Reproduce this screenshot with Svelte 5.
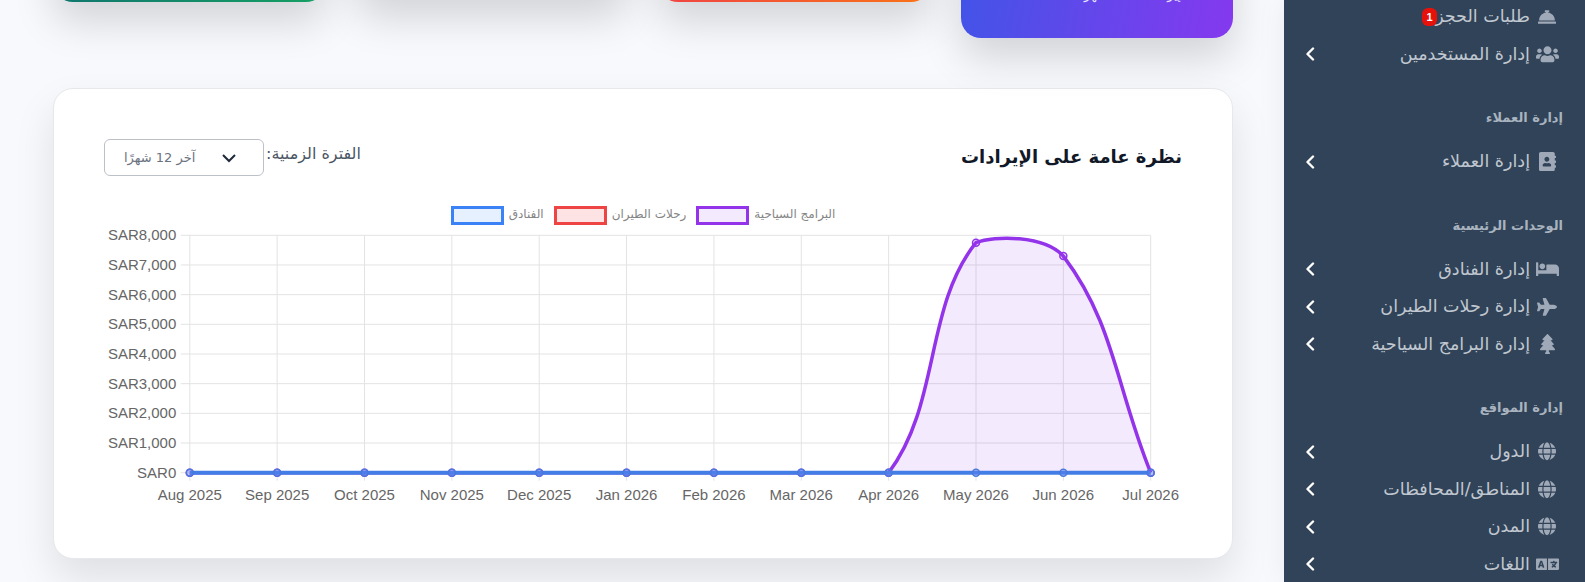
<script>
  const icons = {
    bell: { box: '0 0 512 512', d: 'M288 130.54V112h16c8.84 0 16-7.16 16-16V80c0-8.84-7.16-16-16-16h-96c-8.84 0-16 7.16-16 16v16c0 8.84 7.16 16 16 16h16v18.54C115.49 146.11 32 239.18 32 352h448c0-112.82-83.49-205.89-192-221.46zM496 384H16c-8.84 0-16 7.16-16 16v32c0 8.84 7.16 16 16 16h480c8.84 0 16-7.16 16-16v-32c0-8.84-7.16-16-16-16z' },
    users: { box: '0 0 640 512', d: 'M96 224c35.3 0 64-28.7 64-64s-28.7-64-64-64-64 28.7-64 64 28.7 64 64 64zm448 0c35.3 0 64-28.7 64-64s-28.7-64-64-64-64 28.7-64 64 28.7 64 64 64zm32 32h-64c-17.6 0-33.5 7.1-45.1 18.6 40.3 22.1 68.9 62 75.1 109.4h66c17.7 0 32-14.3 32-32v-32c0-35.3-28.7-64-64-64zm-256 0c61.9 0 112-50.1 112-112S381.9 32 320 32 208 82.1 208 144s50.1 112 112 112zm76.8 32h-8.3c-20.8 10-43.9 16-68.5 16s-47.6-6-68.5-16h-8.3C179.6 288 128 339.6 128 403.2V432c0 26.5 21.5 48 48 48h288c26.5 0 48-21.5 48-48v-28.8c0-63.6-51.6-115.2-115.2-115.2zm-223.7-13.4C161.5 263.1 145.6 256 128 256H64c-35.3 0-64 28.7-64 64v32c0 17.7 14.3 32 32 32h65.9c6.3-47.4 34.9-87.3 75.2-109.4z' },
    book: { box: '0 0 448 512', d: 'M436 160c6.6 0 12-5.4 12-12v-40c0-6.6-5.4-12-12-12h-20V48c0-26.5-21.5-48-48-48H48C21.5 0 0 21.5 0 48v416c0 26.5 21.5 48 48 48h320c26.5 0 48-21.5 48-48v-48h20c6.6 0 12-5.4 12-12v-40c0-6.6-5.4-12-12-12h-20v-64h20c6.6 0 12-5.4 12-12v-40c0-6.6-5.4-12-12-12h-20v-64h20zm-228-32c35.3 0 64 28.7 64 64s-28.7 64-64 64-64-28.7-64-64 28.7-64 64-64zm112 236.8c0 10.6-10 19.2-22.4 19.2H118.4C106 384 96 375.4 96 364.8v-19.2c0-31.8 30.1-57.6 67.2-57.6h5c12.3 5.1 25.7 8 39.8 8s27.6-2.9 39.8-8h5c37.1 0 67.2 25.8 67.2 57.6v19.2z' },
    bed: { box: '0 0 640 512', d: 'M176 256c44.11 0 80-35.89 80-80s-35.89-80-80-80-80 35.89-80 80 35.89 80 80 80zm352-128H304c-8.84 0-16 7.16-16 16v144H64V80c0-8.84-7.16-16-16-16H16C7.16 64 0 71.16 0 80v352c0 8.84 7.16 16 16 16h32c8.84 0 16-7.16 16-16v-48h512v48c0 8.84 7.16 16 16 16h32c8.84 0 16-7.16 16-16V240c0-61.86-50.14-112-112-112z' },
    plane: { box: '0 0 576 512', d: 'M480 192H365.71L260.61 8.06A16.014 16.014 0 0 0 246.71 0h-65.5c-10.63 0-18.3 10.17-15.38 20.39L214.86 192H112l-43.2-57.6c-3.02-4.03-7.77-6.4-12.8-6.4H16.01C5.6 128-2.04 137.78.49 147.88L32 256 .49 364.12C-2.04 374.22 5.6 384 16.01 384H56c5.04 0 9.78-2.37 12.8-6.4L112 320h102.86l-49.03 171.6c-2.92 10.22 4.75 20.4 15.38 20.4h65.5c5.74 0 11.04-3.08 13.89-8.06L365.71 320H480c35.35 0 96-28.65 96-64s-60.65-64-96-64z' },
    tree: { box: '0 0 384 512', d: 'M378.31 378.49L298.42 288h30.63c9.01 0 16.98-5 20.78-13.06 3.8-8.04 2.55-17.26-3.28-24.05L268.42 160h28.89c9.1 0 17.3-5.35 20.86-13.61 3.52-8.13 1.86-17.59-4.24-24.08L203.66 4.83c-6.03-6.45-17.28-6.45-23.32 0L70.06 122.31c-6.1 6.49-7.76 15.95-4.24 24.08C69.38 154.65 77.59 160 86.69 160h28.89l-78.14 90.91c-5.81 6.78-7.06 15.99-3.27 24.04C37.97 283 45.93 288 54.95 288h30.63L5.69 378.49c-6 6.79-7.36 16.09-3.56 24.26 3.75 8.05 12 13.25 21.01 13.25H160v24.45l-30.29 48.4c-5.32 10.64 2.42 23.16 14.31 23.16h95.96c11.89 0 19.63-12.52 14.31-23.16L224 440.45V416h136.86c9.01 0 17.26-5.2 21.01-13.25 3.8-8.17 2.44-17.47-3.56-24.26z' },
    globe: { box: '0 0 496 512', d: 'M336.5 160C322 70.7 287.8 8 248 8s-74 62.7-88.5 152h177zM152 256c0 22.2 1.2 43.5 3.3 64h185.3c2.1-20.5 3.3-41.8 3.3-64s-1.2-43.5-3.3-64H155.3c-2.1 20.5-3.3 41.8-3.3 64zm324.7-96c-28.6-67.9-86.5-120.4-158-141.6 24.4 33.8 41.2 84.7 50 141.6h108zM177.2 18.4C105.8 39.6 47.8 92.1 19.3 160h108c8.7-56.9 25.5-107.8 49.9-141.6zM487.4 192H372.7c2.1 21 3.3 42.5 3.3 64s-1.2 43-3.3 64h114.6c5.5-20.5 8.6-41.8 8.6-64s-3.1-43.5-8.5-64zM120 256c0-21.5 1.2-43 3.3-64H8.6C3.2 212.5 0 233.8 0 256s3.2 43.5 8.6 64h114.6c-2-21-3.2-42.5-3.2-64zm39.5 96c14.5 89.3 48.7 152 88.5 152s74-62.7 88.5-152h-177zm159.3 141.6c71.4-21.2 129.4-73.7 158-141.6h-108c-8.8 56.9-25.6 107.8-50 141.6zM19.3 352c28.6 67.9 86.5 120.4 158 141.6-24.4-33.8-41.2-84.7-50-141.6h-108z' },
    language: { box: '0 0 640 512', d: 'M152.1 236.2c-3.5-12.1-7.8-33.2-7.8-33.2h-.5s-4.3 21.1-7.8 33.2l-11.1 37.5H163zM616 96H336v320h280c13.3 0 24-10.7 24-24V120c0-13.3-10.7-24-24-24zm-24 120c0 6.6-5.4 12-12 12h-11.4c-6.9 23.6-21.7 47.4-42.7 69.9 8.4 6.4 17.1 12.5 26.1 18 5.5 3.4 7.3 10.5 4.1 16.2l-7.9 13.9c-3.4 5.9-10.9 7.8-16.7 4.3-12.6-7.8-24.5-16.1-35.4-24.9-10.9 8.7-22.7 17.1-35.4 24.9-5.8 3.5-13.3 1.6-16.7-4.3l-7.9-13.9c-3.2-5.6-1.4-12.8 4.2-16.2 9.3-5.7 18-11.7 26.1-18-7.9-8.4-14.9-17-21-25.7-4-5.7-2.2-13.6 3.7-17.1l6.5-3.9 7.3-4.3c5.4-3.2 12.4-1.7 16 3.4 5 7 10.8 14 17.4 20.9 13.5-14.2 23.8-28.9 30-43.2H412c-6.6 0-12-5.4-12-12v-16c0-6.6 5.4-12 12-12h64v-16c0-6.6 5.4-12 12-12h16c6.6 0 12 5.4 12 12v16h64c6.6 0 12 5.4 12 12zM0 120v272c0 13.3 10.7 24 24 24h280V96H24c-13.3 0-24 10.7-24 24zm58.9 216.1L116.4 167c1.7-4.9 6.2-8.1 11.4-8.1h32.5c5.1 0 9.7 3.3 11.4 8.1l57.5 169.1c2.6 7.8-3.1 15.9-11.4 15.9h-22.9a12 12 0 0 1-11.5-8.6l-9.4-31.9h-60.2l-9.1 31.8c-1.5 5.1-6.2 8.7-11.5 8.7H70.3c-8.2 0-14-8.1-11.4-15.9z' }
  }

  const menu = [
    { items: [
      { icon: 'bell', w: 18, label: 'طلبات الحجز', badge: 1 },
      { icon: 'users', w: 23, label: 'إدارة المستخدمين', more: true }
    ] },
    { title: 'إدارة العملاء', items: [{ icon: 'book', w: 17, label: 'إدارة العملاء', more: true }] },
    { title: 'الوحدات الرئيسية', items: [
      { icon: 'bed', w: 23, label: 'إدارة الفنادق', more: true },
      { icon: 'plane', w: 20, label: 'إدارة رحلات الطيران', more: true },
      { icon: 'tree', w: 15, label: 'إدارة البرامج السياحية', more: true }
    ] },
    { title: 'إدارة المواقع', items: [
      { icon: 'globe', w: 18, label: 'الدول', more: true },
      { icon: 'globe', w: 18, label: 'المناطق/المحافظات', more: true },
      { icon: 'globe', w: 18, label: 'المدن', more: true },
      { icon: 'language', w: 23, label: 'اللغات', more: true }
    ] }
  ]

  const months = ['Aug 2025', 'Sep 2025', 'Oct 2025', 'Nov 2025', 'Dec 2025', 'Jan 2026', 'Feb 2026', 'Mar 2026', 'Apr 2026', 'May 2026', 'Jun 2026', 'Jul 2026']
  const ticks = [8000, 7000, 6000, 5000, 4000, 3000, 2000, 1000, 0]
  const tours = [0, 0, 0, 0, 0, 0, 0, 0, 0, 7750, 7300, 0]

  // plot area, in svg units (svg starts at page x 104, y 225)
  const left = 85.8
  const right = 1046.7
  const top = 10.3
  const bottom = 247.7

  const xAt = (i) => left + (i * (right - left)) / 11
  const yAt = (v) => bottom - (v / 8000) * (bottom - top)
  const money = (v) => 'SAR' + v.toLocaleString('en-US')
  const cap = (y) => Math.min(bottom, Math.max(top, y))

  // same curve maths as a chart with tension 0.4, control points kept inside the plot
  function curve(values) {
    const pts = values.map((v, i) => ({ x: xAt(i), y: yAt(v) }))
    const dist = (a, b) => Math.hypot(a.x - b.x, a.y - b.y)
    const ctrl = pts.map((p, i) => {
      const a = pts[Math.max(i - 1, 0)]
      const b = pts[Math.min(i + 1, pts.length - 1)]
      const d1 = dist(a, p)
      const d2 = dist(p, b)
      const s1 = d1 + d2 ? (0.4 * d1) / (d1 + d2) : 0
      const s2 = d1 + d2 ? (0.4 * d2) / (d1 + d2) : 0
      return {
        inX: p.x - s1 * (b.x - a.x),
        inY: cap(p.y - s1 * (b.y - a.y)),
        outX: p.x + s2 * (b.x - a.x),
        outY: cap(p.y + s2 * (b.y - a.y))
      }
    })
    let d = `M${pts[0].x} ${pts[0].y}`
    for (let i = 1; i < pts.length; i++) {
      d += `C${ctrl[i - 1].outX} ${ctrl[i - 1].outY} ${ctrl[i].inX} ${ctrl[i].inY} ${pts[i].x} ${pts[i].y}`
    }
    return d
  }

  const tourLine = curve(tours)
  const tourArea = `${tourLine}L${xAt(0)} ${bottom}Z`
</script>

<div class="layout" dir="rtl">
  <aside class="sidebar">
    {#each menu as group}
      <div class="group">
        {#if group.title}<div class="group-title">{group.title}</div>{/if}
        {#each group.items as item}
          <div class="row">
            <span class="icon">
              <svg viewBox={icons[item.icon].box} width={item.w} fill="currentColor"><path d={icons[item.icon].d}></path></svg>
            </span>
            <span class="label">{item.label}</span>
            {#if item.badge}<span class="badge">{item.badge}</span>{/if}
            {#if item.more}
              <svg class="chev" width="10" height="14" viewBox="0 0 10 14"><path d="M8 1.5 2.5 7 8 12.5"></path></svg>
            {/if}
          </div>
        {/each}
      </div>
    {/each}
  </aside>

  <main class="main">
    <div class="stats">
      <div class="stat stat-blue"><span>الإيرادات هذا الشهر</span></div>
      <div class="stat stat-red"></div>
      <div class="stat stat-white"></div>
      <div class="stat stat-green"></div>
    </div>

    <section class="card">
      <div class="card-head">
        <h2>نظرة عامة على الإيرادات</h2>
        <div class="period">
          <span class="period-label">الفترة الزمنية:</span>
          <div class="select">
            <svg width="16" height="16" viewBox="0 0 16 16"><path d="M2 5l6 6 6-6"></path></svg>
            <span>آخر 12 شهرًا</span>
          </div>
        </div>
      </div>

      <div class="legend">
        <span class="legend-item"><span class="legend-text">البرامج السياحية</span><i class="box purple"></i></span>
        <span class="legend-item"><span class="legend-text">رحلات الطيران</span><i class="box red"></i></span>
        <span class="legend-item"><span class="legend-text">الفنادق</span><i class="box blue"></i></span>
      </div>

      <svg class="chart" width="1078" height="284" viewBox="0 0 1078 284">
        {#each ticks as t}
          <line class="grid" x1={left - 9} x2={right} y1={yAt(t)} y2={yAt(t)}></line>
          <text class="tick" x={left - 13.5} y={yAt(t) + 5} text-anchor="end">{money(t)}</text>
        {/each}
        {#each months as m, i}
          <line class="grid" x1={xAt(i)} x2={xAt(i)} y1={top} y2={bottom + 8}></line>
          <text class="tick" x={xAt(i)} y={275} text-anchor="middle">{m}</text>
        {/each}

        <path class="area" d={tourArea}></path>
        <path class="line line-purple" d={tourLine}></path>
        {#each tours as v, i}
          <circle class="dot dot-purple" cx={xAt(i)} cy={yAt(v)} r="3.5"></circle>
        {/each}
        <line class="line line-blue" x1={left} x2={right} y1={bottom} y2={bottom}></line>
        {#each months as m, i}
          <circle class="dot dot-blue" cx={xAt(i)} cy={bottom} r="3.5"></circle>
        {/each}
      </svg>
    </section>
  </main>
</div>

<style>
  :global(body) {
    margin: 0;
    background: #f8f9fc;
    overflow: hidden;
  }

  .layout {
    display: flex;
    height: 582px;
    overflow: hidden;
    font-family: "DejaVu Sans", sans-serif;
  }

  .sidebar {
    width: 301px;
    flex: none;
    background: #304358;
    overflow: hidden;
    padding: 0 26px 0 21px;
    box-sizing: border-box;
    box-shadow: 0 0 30px rgba(0, 0, 0, 0.06);
    position: relative;
  }

  .group {
    padding-top: 36px;
  }

  .group:first-child {
    padding-top: 0;
    margin-top: -2px;
  }

  .group-title {
    font-size: 13px;
    font-weight: 700;
    line-height: 18px;
    color: #a9b3bf;
    margin: 0 -4px 16px 0;
  }

  .row {
    display: flex;
    align-items: center;
    height: 37.5px;
    color: #c0c7d0;
    font-size: 17.5px;
  }

  .icon {
    width: 24px;
    flex: none;
    margin-left: 5px;
    display: flex;
    justify-content: center;
    color: #a0a9b7;
  }

  .label {
    white-space: nowrap;
    line-height: 1;
  }

  .badge {
    width: 15px;
    height: 18px;
    border-radius: 6px;
    background: #e7110b;
    color: #fff;
    font-size: 11px;
    font-weight: 700;
    font-family: "Liberation Sans", sans-serif;
    display: flex;
    align-items: center;
    justify-content: center;
    margin-right: -2px;
  }

  .chev {
    margin-right: auto;
    fill: none;
    stroke: #fff;
    stroke-width: 2.4;
    stroke-linecap: round;
    stroke-linejoin: round;
  }

  .main {
    flex: 1;
    min-width: 0;
    padding: 0 51px 0 53px;
  }

  .stats {
    display: grid;
    grid-template-columns: repeat(4, minmax(0, 1fr));
    gap: 30px;
    height: 38px;
    align-items: start;
  }

  .stat {
    box-sizing: border-box;
    height: 140px;
    margin-top: -138px;
    border-radius: 20px;
    box-shadow: 0 20px 40px rgba(0, 0, 0, 0.15);
  }

  .stat-blue {
    margin-top: -102.5px;
    background: linear-gradient(100deg, #3f55e8, #8539ee);
    color: #e6e4fb;
    font-size: 13px;
    display: flex;
    align-items: flex-end;
    padding: 0 44px 36px;
    white-space: nowrap;
    overflow: hidden;
  }

  .stat-red {
    background: linear-gradient(90deg, #ef4444, #f97316);
  }

  .stat-white {
    margin-top: -142px;
    background: #fff;
  }

  .stat-green {
    background: linear-gradient(90deg, #0f766e, #16a063);
  }

  .card {
    margin-top: 50px;
    height: 471px;
    box-sizing: border-box;
    padding: 50px 50px 0;
    background: #fff;
    border: 1px solid #e6e8ec;
    border-radius: 20px;
    box-shadow: 0 20px 40px rgba(0, 0, 0, 0.1);
  }

  .card-head {
    display: flex;
    justify-content: space-between;
    align-items: flex-start;
  }

  h2 {
    margin: 0;
    font-size: 18px;
    font-weight: 700;
    line-height: 36px;
    color: #111827;
  }

  .period {
    display: flex;
    align-items: flex-start;
    gap: 2px;
  }

  .period-label {
    font-size: 16px;
    line-height: 30px;
    color: #4b5563;
  }

  .select {
    height: 35px;
    border: 1px solid #bcc1c8;
    border-radius: 6px;
    display: flex;
    align-items: center;
    justify-content: space-between;
    padding: 0 26px 0 19px;
    width: 113px;
    font-size: 13px;
    color: #6b7280;
  }

  .select svg {
    fill: none;
    stroke: #1f2937;
    stroke-width: 2;
  }

  .legend {
    display: flex;
    justify-content: center;
    gap: 10px;
    margin-top: 30px;
    height: 19px;
  }

  .legend-item {
    display: flex;
    align-items: center;
    gap: 5px;
    font-size: 12px;
    color: #858585;
  }

  .legend-text {
    padding-bottom: 3px;
  }

  .box {
    display: block;
    width: 47px;
    height: 13px;
    border: 3px solid;
  }

  .purple { border-color: #9333ea; background: rgba(147, 51, 234, 0.1); }
  .red { border-color: #ef4444; background: rgba(239, 68, 68, 0.15); }
  .blue { border-color: #3b82f6; background: rgba(59, 130, 246, 0.12); }

  .chart {
    display: block;
    direction: ltr;
  }

  .grid {
    stroke: #e3e3e3;
    stroke-width: 1;
  }

  .tick {
    font-family: "Liberation Sans", Arial, sans-serif;
    font-size: 15px;
    fill: #666;
  }

  .area {
    fill: rgba(147, 51, 234, 0.1);
  }

  .line {
    fill: none;
    stroke-width: 3.5;
  }

  .line-purple { stroke: #9333ea; }
  .line-blue { stroke: #437de6; stroke-width: 4; }

  .dot {
    stroke-width: 1.5;
  }

  .dot-purple {
    fill: rgba(147, 51, 234, 0.15);
    stroke: #9333ea;
  }

  .dot-blue {
    fill: rgba(96, 130, 240, 0.35);
    stroke: #4a78dc;
  }
</style>
